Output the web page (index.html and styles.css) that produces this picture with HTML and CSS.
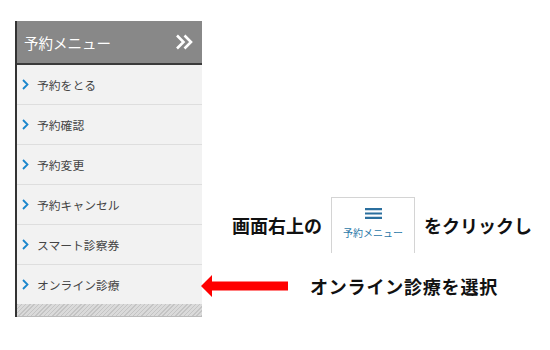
FILE: index.html
```html
<!DOCTYPE html>
<html lang="ja">
<head>
<meta charset="utf-8">
<link rel="stylesheet" href="styles.css">
</head>
<body>
<div class="page">
  <div class="panel">
    <div class="panel-head">
      <span class="panel-title">予約メニュー</span>
      <svg class="dbl" width="18" height="16" viewBox="0 0 18 16"><path d="M2 1.5 L8.5 8 L2 14.5 M9.5 1.5 L16 8 L9.5 14.5" fill="none" stroke="#fff" stroke-width="2.6"/></svg>
    </div>
    <ul class="menu">
      <li class="item"><svg class="chev" width="7" height="11" viewBox="0 0 7 11"><path d="M1 1 L5.5 5.5 L1 10" fill="none" stroke="#1a86cc" stroke-width="1.8"/></svg>予約をとる</li>
      <li class="item"><svg class="chev" width="7" height="11" viewBox="0 0 7 11"><path d="M1 1 L5.5 5.5 L1 10" fill="none" stroke="#1a86cc" stroke-width="1.8"/></svg>予約確認</li>
      <li class="item"><svg class="chev" width="7" height="11" viewBox="0 0 7 11"><path d="M1 1 L5.5 5.5 L1 10" fill="none" stroke="#1a86cc" stroke-width="1.8"/></svg>予約変更</li>
      <li class="item"><svg class="chev" width="7" height="11" viewBox="0 0 7 11"><path d="M1 1 L5.5 5.5 L1 10" fill="none" stroke="#1a86cc" stroke-width="1.8"/></svg>予約キャンセル</li>
      <li class="item"><svg class="chev" width="7" height="11" viewBox="0 0 7 11"><path d="M1 1 L5.5 5.5 L1 10" fill="none" stroke="#1a86cc" stroke-width="1.8"/></svg>スマート診察券</li>
      <li class="item"><svg class="chev" width="7" height="11" viewBox="0 0 7 11"><path d="M1 1 L5.5 5.5 L1 10" fill="none" stroke="#1a86cc" stroke-width="1.8"/></svg>オンライン診療</li>
    </ul>
    <div class="hatch"></div>
  </div>
  <div class="guide">
    <div class="step step1">
      <span class="label">画面右上の</span>
      <span class="btn">
        <svg class="burger" width="17" height="11" viewBox="0 0 17 11"><path d="M0 1.2 H17 M0 5.5 H17 M0 9.8 H17" stroke="#2b6f9e" stroke-width="2.2"/></svg>
        <span class="btn-text">予約メニュー</span>
      </span>
      <span class="label">をクリックし</span>
    </div>
    <div class="step step2">
      <svg class="arrow" width="88" height="22" viewBox="0 0 88 22"><path d="M0 11 L11 0 L11 6.5 L87 6.5 L87 15.5 L11 15.5 L11 22 Z" fill="#ff0000"/></svg>
      <span class="label label2">オンライン診療を選択</span>
    </div>
  </div>
</div>
</body>
</html>
```
FILE: styles.css
```css
html, body {
  margin: 0;
  padding: 0;
  background: #fff;
}
body {
  font-family: "Noto Sans CJK JP", "Noto Sans", sans-serif;
  width: 550px;
  height: 350px;
  overflow: hidden;
}
.page {
  display: flex;
  align-items: flex-start;
}
.panel {
  margin-left: 15px;
  margin-top: 21px;
  width: 185px;
  border-left: 2px solid #333;
  background: #f2f2f2;
}
.panel-head {
  height: 42px;
  background: #888888;
  border-bottom: 2px solid #3a3a3a;
  display: flex;
  align-items: center;
  justify-content: space-between;
  padding: 0 9px 0 7px;
}
.panel-title {
  color: #fff;
  font-size: 14.5px;
}
.dbl {
  display: block;
}
.menu {
  list-style: none;
  margin: 0;
  padding: 0;
}
.item {
  height: 39px;
  border-bottom: 1px solid #dedede;
  display: flex;
  align-items: center;
  padding-left: 5px;
  gap: 8px;
  font-size: 11.8px;
  color: #444;
}
.item:last-child {
  border-bottom: none;
}
.chev {
  display: block;
}
.hatch {
  height: 12px;
  background: repeating-linear-gradient(135deg, #c4c4c4 0 1px, #dadada 1px 3px);
  border-bottom: 1px solid #bbb;
}
.guide {
  display: flex;
  flex-direction: column;
  padding-top: 197px;
}
.step {
  display: flex;
  align-items: center;
}
.step1 {
  margin-left: 30px;
}
.label {
  font-size: 18px;
  font-weight: bold;
  color: #111;
}
.btn {
  margin: 0 9px 0 9px;
  width: 84px;
  height: 56px;
  border: 1px solid #d4d4d4;
  border-bottom: none;
  box-sizing: border-box;
  display: flex;
  flex-direction: column;
  align-items: center;
  padding-top: 10px;
  gap: 6px;
}
.burger {
  display: block;
}
.btn-text {
  font-size: 10px;
  color: #2b78a8;
}
.step2 {
  margin-top: 20px;
  margin-left: -1px;
}
.arrow {
  display: block;
}
.label2 {
  margin-left: 21px;
  letter-spacing: 0.8px;
}
```
